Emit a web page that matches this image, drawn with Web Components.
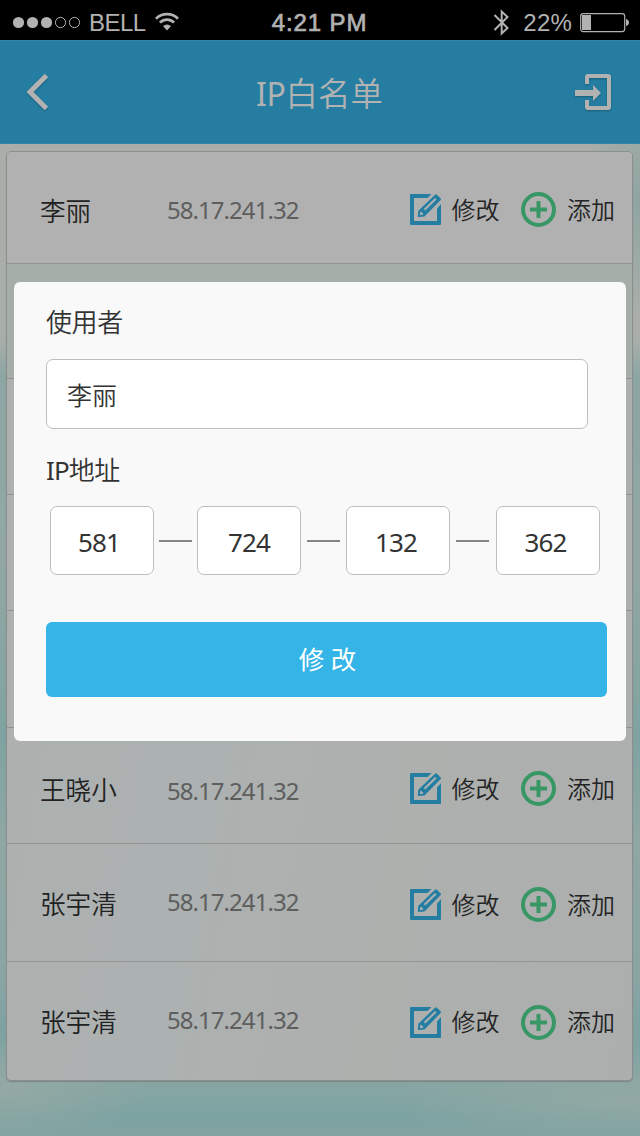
<!DOCTYPE html>
<html lang="zh-CN">
<head>
<meta charset="utf-8">
<title>IP白名单</title>
<style>
html,body{margin:0;padding:0}
body{width:640px;height:1136px;overflow:hidden;font-family:"Noto Sans","Noto Sans CJK SC",sans-serif}
</style>
</head>
<body>
<app-screen></app-screen>
<script>
const define=(name,html)=>{
  const t=document.createElement('template');
  t.innerHTML=html;
  customElements.define(name,class extends HTMLElement{
    constructor(){
      super();
      this.attachShadow({mode:'open'}).appendChild(t.content.cloneNode(true));
    }
  });
};

define('status-bar',`<style>
:host{display:grid;grid-template-columns:1fr auto 1fr;align-items:center;height:40px;background:#000;color:#b2b2b2;font:24px/40px "Liberation Sans",sans-serif;padding:0 11px 0 12px;box-sizing:border-box}
.l,.r{display:flex;align-items:center;height:40px}
.r{justify-content:flex-end}
span{position:relative;top:3px;white-space:pre}
svg{display:block;flex:none}
.carrier{margin-left:8px;letter-spacing:-.5px}
.wifi{margin-left:9px}
.time{font-weight:400;-webkit-text-stroke:.7px #b2b2b2;letter-spacing:.9px;left:-1px}
.pct{margin:0 8px 0 13px;letter-spacing:.2px}
</style>
<div class="l">
<svg width="69" height="40"><g fill="#b2b2b2"><circle cx="6.500" cy="22.500" r="5.600"/><circle cx="20.500" cy="22.500" r="5.600"/><circle cx="34.500" cy="22.500" r="5.600"/></g><g fill="none" stroke="#b2b2b2"><circle cx="48.500" cy="22.500" r="5.100"/><circle cx="62.500" cy="22.500" r="5.100"/></g></svg>
<span class="carrier">BELL</span>
<svg class="wifi" width="24" height="40" viewBox="0 0 24 40"><g fill="none" stroke="#b2b2b2" stroke-width="2.800"><path d="M1 18.700C7 12.700 17 12.700 23 18.700"/><path d="M4.900 22.600C9 18.600 15 18.600 19.100 22.600"/></g><path d="M8 26q4-3 8 0l-4 4.500z" fill="#b2b2b2"/></svg>
</div>
<span class="time">4:21 PM</span>
<div class="r">
<svg width="17" height="40" viewBox="0 0 17 40"><path d="M1.500 15L14.500 28 8.700 33.500V11.500L14.500 17 1.500 30" fill="none" stroke="#b2b2b2" stroke-width="2"/></svg>
<span class="pct">22%</span>
<svg width="49" height="40" viewBox="0 0 49 40"><rect x=".700" y="13.600" width="44" height="18" rx="2.500" fill="none" stroke="#b2b2b2" stroke-width="1.200"/><path d="M2 15h9v15H2zM46 19q3 1 3 3.500t-3 3.500z" fill="#b2b2b2"/></svg>
</div>`);

define('nav-bar',`<style>
:host{display:flex;align-items:center;justify-content:space-between;height:104px;box-sizing:border-box;background:#257ea1;border-top:1px solid #2c88ab;border-bottom:1px solid #2c86a8;padding:0 27px 0 26px;color:#b2b2b2}
svg{display:block;filter:drop-shadow(0 1px 1px #1b5d77)}
h1{margin:2px 0 0;font:350 32.500px/46px "Noto Sans CJK SC",sans-serif}
::slotted(b){font:400 32px/46px "Noto Sans";letter-spacing:-.3px}
</style>
<svg width="38" height="40" viewBox="0 0 38 40"><path d="M20.500 3.500L4 20 20.500 36.500" fill="none" stroke="#b2b2b2" stroke-width="5"/></svg>
<h1><slot></slot></h1>
<svg width="38" height="40" viewBox="0 0 38 40"><path d="M12 12V5a1 1 0 0 1 1-1h20a1 1 0 0 1 1 1v30a1 1 0 0 1-1 1H13a1 1 0 0 1-1-1v-7" fill="none" stroke="#b2b2b2" stroke-width="4"/><path d="M0 18h18V13l8 8-8 8v-5H0z" fill="#b2b2b2"/></svg>`);

define('edit-action',`<style>
:host{display:flex;align-items:center;color:#242424;font:350 24px/36px "Noto Sans CJK SC",sans-serif}
svg{margin-right:10.500px;flex:none}
span{margin-top:-2px}
</style>
<svg width="31" height="31" viewBox="0 0 31 31"><path d="M1 0H21.500L17.500 4H4v23h23V14.500L31 10v20a1 1 0 0 1-1 1H1a1 1 0 0 1-1-1V1a1 1 0 0 1 1-1z" fill="#257ea1"/><path d="M25 .700q1-1 2 0l3.500 3.500q1 1 0 2L14.500 22.500 8.700 23q-.900 0-.900-.900L8.300 16.700z" fill="#257ea1"/><path d="M14.500 15.800L25.800 4.700" stroke="#b0b1b1" stroke-width="2"/><path d="M10.300 20.700l.600-2.800 2.200 2.200z" fill="#b0b1b1" stroke="#b0b1b1" stroke-width=".800"/></svg>
<span><slot></slot></span>`);

define('add-action',`<style>
:host{display:flex;align-items:center;color:#242424;font:350 24px/36px "Noto Sans CJK SC",sans-serif}
svg{margin-right:11px;flex:none}
span{margin-top:-2px}
</style>
<svg width="35" height="35" viewBox="0 0 35 35"><circle cx="17.500" cy="17.500" r="15.500" fill="none" stroke="#389765" stroke-width="4"/><path d="M17.500 9v17M9 17.500h17" stroke="#389765" stroke-width="4"/></svg>
<span><slot></slot></span>`);

define('ip-row',`<style>
:host{display:grid;grid-template-columns:127px 243px 111px 1fr;align-items:center;box-sizing:border-box;height:116px;padding-left:33px;border-bottom:1px solid #929494}
.name{color:#222;font:350 25.600px/38px "Noto Sans CJK SC",sans-serif;transform:translateY(var(--name-y,0px))}
.ip{color:#5e5e5e;font:400 24px/36px "Noto Sans",sans-serif;letter-spacing:-.95px;transform:translateY(var(--ip-y,0px))}
.act{transform:translateY(var(--act-y,0px))}
</style>
<div class="name"><slot name="name"></slot></div><div class="ip"><slot name="ip"></slot></div><div class="act"><slot name="edit"></slot></div><div class="act"><slot name="add"></slot></div>`);

define('ip-list',`<style>
:host{display:flex;flex-direction:column;box-sizing:border-box;margin:7px 7px 0 6px;height:930px;border:1px solid #8b8e8d;border-radius:5px;overflow:hidden;background:linear-gradient(100deg,#aeb0af 0%,#acb1b1 38%,#aeb0ae 65%,#adafaf 100%);box-shadow:0 1px 1px #788785}
</style><slot></slot>`);

define('text-field',`<style>
:host{display:flex;align-items:center;box-sizing:border-box;background:#fff;border:1px solid #bebebe;border-radius:7px;color:#333;font:350 25px/38px "Noto Sans CJK SC",sans-serif}
</style><slot></slot>`);

define('edit-dialog',`<style>
:host{display:block;box-sizing:border-box;background:#f9f9f9;border-radius:6px;padding:20px 19px 0 32px;color:#333}
.label{height:38px;font:350 26px/38px "Noto Sans CJK SC",sans-serif;letter-spacing:-.4px}
.label b{font:400 26px/38px "Noto Sans";letter-spacing:-.9px}
.user{width:542px;height:70px;margin:19px 0 21px;padding-left:20px}
.ip{display:flex;align-items:center;margin:18px 0 0 4px}
.ip text-field{width:104px;height:69px;flex:none;justify-content:center;padding:3px 6px 0 0;letter-spacing:-.9px;font-family:"Noto Sans";font-weight:400;font-size:26px}
.ip i{width:33px;height:2px;background:#858585;flex:none;margin:0 5px}
button{display:block;width:561px;height:75px;margin:47px 0 0;padding:0 0 0 2px;border:0;border-radius:6px;background:#35b5e7;color:#fff;font:400 25.500px/75px "Noto Sans","Noto Sans CJK SC",sans-serif}
</style>
<div class="label">使用者</div>
<text-field class="user">李丽</text-field>
<div class="label"><b>IP</b>地址</div>
<div class="ip"><text-field>581</text-field><i></i><text-field style="padding-right:0">724</text-field><i style="margin:0 6px"></i><text-field style="padding-right:4px">132</text-field><i style="margin:0 7px 0 6px"></i><text-field style="padding-right:5px">362</text-field></div>
<button>修 改</button>`);

const act='<edit-action slot="edit">修改</edit-action><add-action slot="add">添加</add-action>';
const row=(name,style)=>`<ip-row style="${style}"><span slot="name">${name}</span><span slot="ip">58.17.241.32</span>${act}</ip-row>`;
define('app-screen',`<style>
:host{display:block;position:relative;width:640px;height:1136px;overflow:hidden;background:
radial-gradient(ellipse 260px 40px at 640px 1100px,#93a9a4 0,#93a9a400 100%),
radial-gradient(ellipse 150px 50px at 0 1090px,#94a9a4 0,#94a9a400 100%),
radial-gradient(ellipse 60px 110px at 640px 200px,#8fa5a0 0,#8fa5a000 100%),
linear-gradient(180deg,#a9aeaa 0,#a9aeaa 340px,#8ca6a3 375px,#90a7a4 500px,#92a7a3 560px,#7fa3a1 740px,#8fa7a3 840px,#89a5a4 980px,#7da2a1 1030px,#88a6a3 1080px,#7ca3a2 1115px,#81a3a2 1136px)}
edit-dialog{position:absolute;left:14px;top:282px;width:612px;height:459px}
</style>
<status-bar></status-bar>
<nav-bar><b>IP</b>白名单</nav-bar>
<ip-list>
${row('李丽','height:112px;background:#b1b1b1;--name-y:2px;--ip-y:2px;--act-y:2px')}
<ip-row style="height:115px;background:#a5aea9"></ip-row>
<ip-row></ip-row>
<ip-row></ip-row>
<ip-row style="height:117px"></ip-row>
${row('王晓小','--name-y:3px;--ip-y:5px;--act-y:3px')}
${row('张宇清','height:118px;--name-y:0px;--ip-y:-1px;--act-y:2px')}
${row('张宇清','height:118px;border:0;--name-y:0px;--ip-y:-1px;--act-y:1px')}
</ip-list>
<edit-dialog></edit-dialog>`);
</script>
</body>
</html>
